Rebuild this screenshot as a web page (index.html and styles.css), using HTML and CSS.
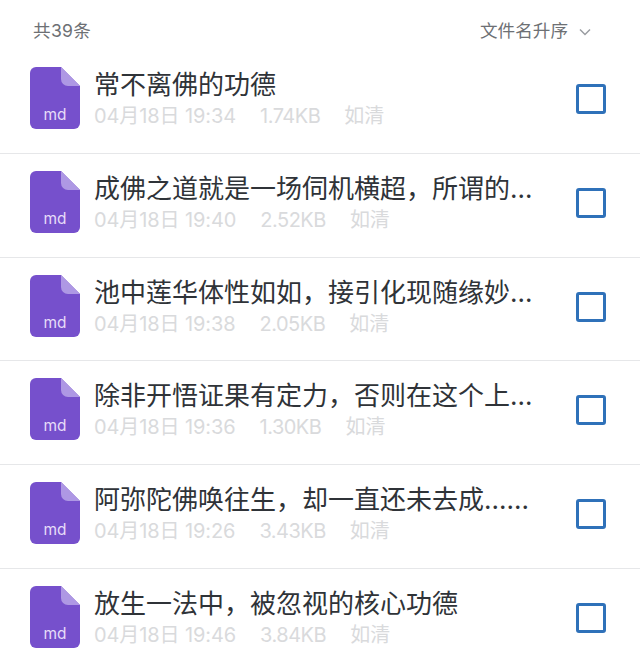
FILE: index.html
```html
<!DOCTYPE html>
<html lang="zh">
<head>
<meta charset="utf-8">
<title>文件列表</title>
<link rel="stylesheet" href="styles.css">
</head>
<body>
<div class="page">
  <header class="bar">
    <span class="count">共39条</span>
    <span class="sort">文件名升序
      <svg class="chev" width="12" height="8" viewBox="0 0 12 8"><path d="M1 1.5l5 5 5-5" fill="none" stroke="#9a9da1" stroke-width="1.5"/></svg>
    </span>
  </header>
  <ul class="list">
    <li class="row">
      <svg class="ficon" width="50" height="62" viewBox="0 0 50 62"><path d="M6 0H31L50 19V56a6 6 0 0 1-6 6H6a6 6 0 0 1-6-6V6a6 6 0 0 1 6-6z" fill="#7650cc"/><path d="M31 0L50 19H38a7 7 0 0 1-7-7z" fill="#ae98e4"/><text x="25" y="53" text-anchor="middle" class="ftext">md</text></svg>
      <div class="info"><div class="title">常不离佛的功德</div><div class="meta"><span class="date">04月18日 19:34</span><span class="size">1.74KB</span><span>如清</span></div></div>
      <span class="check"></span>
    </li>
    <li class="row">
      <svg class="ficon" width="50" height="62" viewBox="0 0 50 62"><path d="M6 0H31L50 19V56a6 6 0 0 1-6 6H6a6 6 0 0 1-6-6V6a6 6 0 0 1 6-6z" fill="#7650cc"/><path d="M31 0L50 19H38a7 7 0 0 1-7-7z" fill="#ae98e4"/><text x="25" y="53" text-anchor="middle" class="ftext">md</text></svg>
      <div class="info"><div class="title">成佛之道就是一场伺机横超，所谓的…</div><div class="meta"><span class="date">04月18日 19:40</span><span class="size">2.52KB</span><span>如清</span></div></div>
      <span class="check"></span>
    </li>
    <li class="row">
      <svg class="ficon" width="50" height="62" viewBox="0 0 50 62"><path d="M6 0H31L50 19V56a6 6 0 0 1-6 6H6a6 6 0 0 1-6-6V6a6 6 0 0 1 6-6z" fill="#7650cc"/><path d="M31 0L50 19H38a7 7 0 0 1-7-7z" fill="#ae98e4"/><text x="25" y="53" text-anchor="middle" class="ftext">md</text></svg>
      <div class="info"><div class="title">池中莲华体性如如，接引化现随缘妙…</div><div class="meta"><span class="date">04月18日 19:38</span><span class="size">2.05KB</span><span>如清</span></div></div>
      <span class="check"></span>
    </li>
    <li class="row">
      <svg class="ficon" width="50" height="62" viewBox="0 0 50 62"><path d="M6 0H31L50 19V56a6 6 0 0 1-6 6H6a6 6 0 0 1-6-6V6a6 6 0 0 1 6-6z" fill="#7650cc"/><path d="M31 0L50 19H38a7 7 0 0 1-7-7z" fill="#ae98e4"/><text x="25" y="53" text-anchor="middle" class="ftext">md</text></svg>
      <div class="info"><div class="title">除非开悟证果有定力，否则在这个上…</div><div class="meta"><span class="date">04月18日 19:36</span><span class="size">1.30KB</span><span>如清</span></div></div>
      <span class="check"></span>
    </li>
    <li class="row">
      <svg class="ficon" width="50" height="62" viewBox="0 0 50 62"><path d="M6 0H31L50 19V56a6 6 0 0 1-6 6H6a6 6 0 0 1-6-6V6a6 6 0 0 1 6-6z" fill="#7650cc"/><path d="M31 0L50 19H38a7 7 0 0 1-7-7z" fill="#ae98e4"/><text x="25" y="53" text-anchor="middle" class="ftext">md</text></svg>
      <div class="info"><div class="title">阿弥陀佛唤往生，却一直还未去成......</div><div class="meta"><span class="date">04月18日 19:26</span><span class="size">3.43KB</span><span>如清</span></div></div>
      <span class="check"></span>
    </li>
    <li class="row">
      <svg class="ficon" width="50" height="62" viewBox="0 0 50 62"><path d="M6 0H31L50 19V56a6 6 0 0 1-6 6H6a6 6 0 0 1-6-6V6a6 6 0 0 1 6-6z" fill="#7650cc"/><path d="M31 0L50 19H38a7 7 0 0 1-7-7z" fill="#ae98e4"/><text x="25" y="53" text-anchor="middle" class="ftext">md</text></svg>
      <div class="info"><div class="title">放生一法中，被忽视的核心功德</div><div class="meta"><span class="date">04月18日 19:46</span><span class="size">3.84KB</span><span>如清</span></div></div>
      <span class="check"></span>
    </li>
  </ul>
</div>
</body>
</html>
```
FILE: styles.css
```css
* { box-sizing: border-box; }
html, body { margin: 0; padding: 0; background: #fff; }
body { font-family: Inter, "Noto Sans CJK SC", sans-serif; overflow: hidden; height: 656px; }
.page { width: 640px; height: 656px; overflow: hidden; }
.bar { height: 50px; padding: 18px 49px 0 33px; display: flex; justify-content: space-between; align-items: flex-start; color: #6d7074; font-size: 17.6px; line-height: 26px; }
.count { letter-spacing: 0.3px; }
.sort { display: flex; align-items: center; gap: 11px; }
.chev { display: block; margin-top: 1px; }
.list { list-style: none; margin: 0; padding: 0; }
.row { height: 103.8px; padding: 17px 34px 0 30px; display: flex; align-items: flex-start; border-bottom: 1px solid #e6e7e9; }
.ficon { flex: none; display: block; }
.ftext { font-family: Inter, sans-serif; font-size: 15.5px; fill: #e6dcf8; }
.info { width: 443px; margin-left: 14px; flex: none; min-width: 0; }
.title { font-size: 26px; line-height: 36px; color: #2f3338; white-space: nowrap; }
.meta { display: flex; gap: 24px; font-size: 20px; line-height: 26px; color: #d9dadc; white-space: nowrap; }
.date { letter-spacing: -0.1px; }
.size { letter-spacing: -0.5px; }
.check { flex: none; width: 30px; height: 30px; margin-left: 39px; margin-top: 17px; border: 3.5px solid #2f71b9; border-radius: 3px; }
```
